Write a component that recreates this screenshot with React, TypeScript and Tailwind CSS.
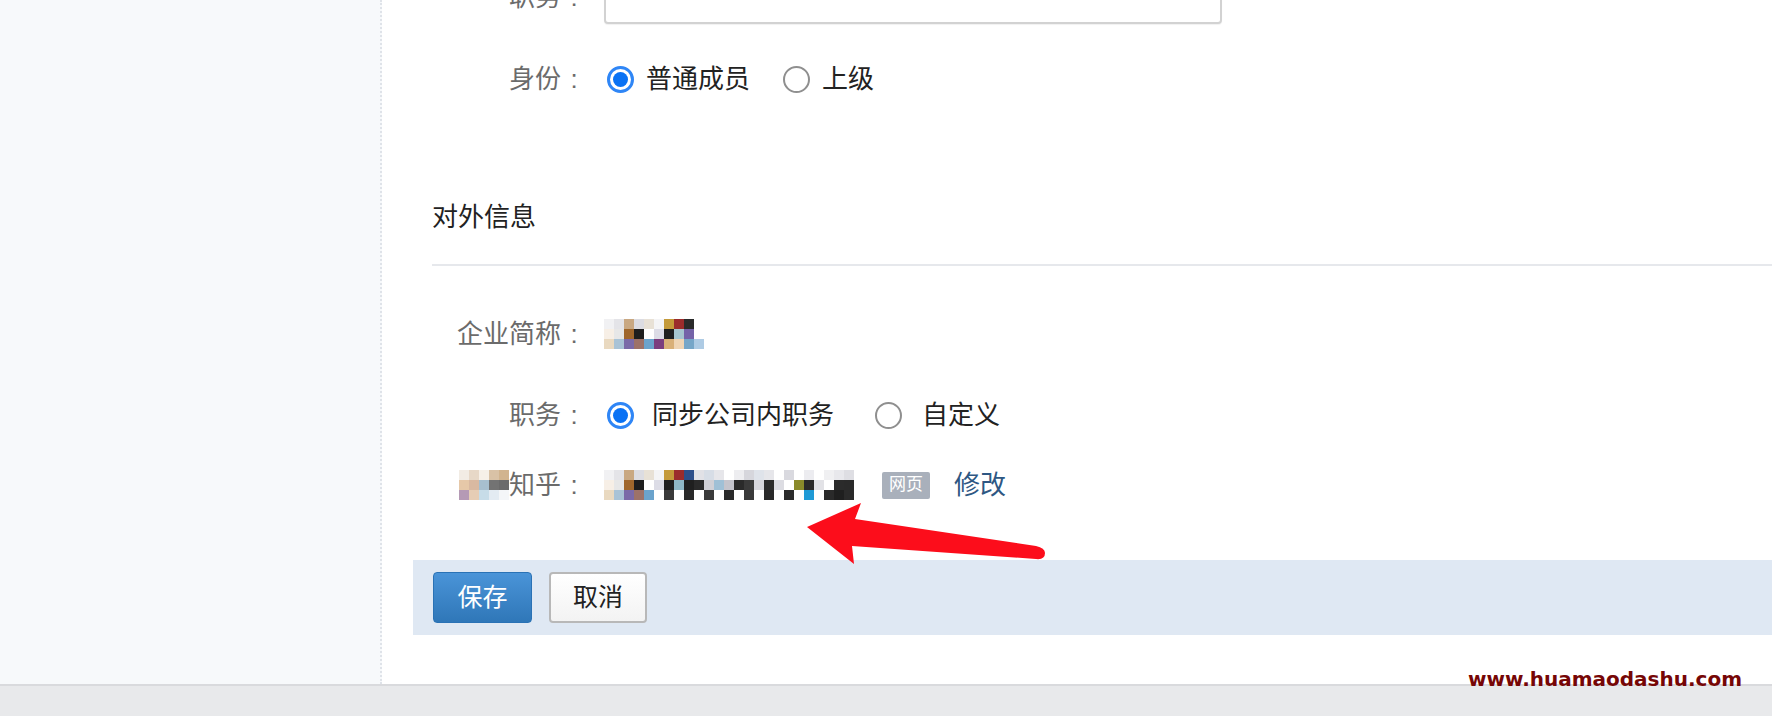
const cjk = "font-['Liberation_Sans','Noto_Sans_CJK_SC',sans-serif]";

// pixelated (mosaic) blocks standing in for blurred text
const mosaicA = [
  ["bg-[#f1f1f3]", "bg-[#e4e4e8]", "bg-[#c9a882]", "bg-[#dcdce2]", "bg-[#e8e1d6]", "bg-[#f4f4f6]", "bg-[#c49a3a]", "bg-[#9b2c2c]", "bg-[#2a2a2a]", "bg-[#ffffff]"],
  ["bg-[#f7efe6]", "bg-[#e7e7e7]", "bg-[#a0672c]", "bg-[#1e1e1e]", "bg-[#ffffff]", "bg-[#dcdce6]", "bg-[#1f1f1f]", "bg-[#a6c6cf]", "bg-[#7463a8]", "bg-[#ffffff]"],
  ["bg-[#e9d9c0]", "bg-[#a9c3d6]", "bg-[#7a6aa8]", "bg-[#9d7268]", "bg-[#6ba3cc]", "bg-[#7b3d7e]", "bg-[#d9b078]", "bg-[#efd5b5]", "bg-[#76a6c8]", "bg-[#aecbe4]"],
];

const mosaicPrefix = [
  ["bg-[#f2ece4]", "bg-[#e7d8c7]", "bg-[#f6f0e8]", "bg-[#d9c2a6]", "bg-[#d1b48f]"],
  ["bg-[#e6c8a8]", "bg-[#d9b9a1]", "bg-[#a7bfcf]", "bg-[#737373]", "bg-[#6b6b6b]"],
  ["bg-[#b59ab5]", "bg-[#e6cdb5]", "bg-[#c7dce8]", "bg-[#e3ebf2]", "bg-[#f4f6f8]"],
];

const mosaicB = [
  ["bg-[#f1f1f3]", "bg-[#e4e4e8]", "bg-[#c9a882]", "bg-[#dcdce2]", "bg-[#e8e1d6]", "bg-[#f4f4f6]", "bg-[#c49a3a]", "bg-[#9b2c2c]", "bg-[#2d4f8a]", "bg-[#e1e1e6]", "bg-[#d7dde6]", "bg-[#e6e6ea]", "bg-[#ffffff]", "bg-[#ededf0]", "bg-[#d6d6dc]", "bg-[#dfe3ea]", "bg-[#e6e6ea]", "bg-[#ffffff]", "bg-[#d9d9df]", "bg-[#ffffff]", "bg-[#ececf0]", "bg-[#ffffff]", "bg-[#f0f0f2]", "bg-[#e8e8ec]", "bg-[#dedee3]", "bg-[#ffffff]"],
  ["bg-[#f7efe6]", "bg-[#e7e7e7]", "bg-[#a0672c]", "bg-[#1e1e1e]", "bg-[#ffffff]", "bg-[#dcdce6]", "bg-[#1f1f1f]", "bg-[#8fb7c6]", "bg-[#1f1f1f]", "bg-[#2a2a2a]", "bg-[#d0d0d6]", "bg-[#9fc0d6]", "bg-[#c4c4cc]", "bg-[#2a2a2a]", "bg-[#3a3a3a]", "bg-[#d6d6dc]", "bg-[#2b2b2b]", "bg-[#dcdce2]", "bg-[#ffffff]", "bg-[#8a8a2a]", "bg-[#2a2a2a]", "bg-[#e2e2e6]", "bg-[#ffffff]", "bg-[#2b2b2b]", "bg-[#2a2a2a]", "bg-[#ffffff]"],
  ["bg-[#e9d9c0]", "bg-[#a9c3d6]", "bg-[#7a6aa8]", "bg-[#9d7268]", "bg-[#6ba3cc]", "bg-[#ffffff]", "bg-[#3a3a3a]", "bg-[#ffffff]", "bg-[#2a2a2a]", "bg-[#ffffff]", "bg-[#3a3a3a]", "bg-[#ffffff]", "bg-[#2a2a2a]", "bg-[#ffffff]", "bg-[#3a3a3a]", "bg-[#ffffff]", "bg-[#2a2a2a]", "bg-[#ffffff]", "bg-[#2b2b2b]", "bg-[#ffffff]", "bg-[#1f9ad6]", "bg-[#ffffff]", "bg-[#2a2a2a]", "bg-[#1f1f1f]", "bg-[#2a2a2a]", "bg-[#ffffff]"],
];

const Mosaic = ({ rows }: { rows: string[][] }) => (
  <div className="flex flex-col">
    {rows.map((row, i) => (
      <div key={i} className="flex">
        {row.map((c, j) => (
          <div key={j} className={`w-[10px] h-[10px] ${c}`} />
        ))}
      </div>
    ))}
  </div>
);

const Radio = ({ checked, label, className }: { checked?: boolean; label: string; className: string }) => (
  <div className={`flex items-center ${className}`}>
    {checked ? (
      <div className="w-[27px] h-[27px] rounded-full border-[3px] border-[#2f86f6] bg-white flex items-center justify-center shrink-0">
        <div className="w-[15px] h-[15px] rounded-full bg-[#0a72f4]" />
      </div>
    ) : (
      <div className="w-[27px] h-[27px] rounded-full border-2 border-[#8f8f8f] bg-white shrink-0" />
    )}
    <span className="text-[26px] text-[#222]">{label}</span>
  </div>
);

const Label = ({ children }: { children: React.ReactNode }) => (
  <div className="w-[155px] flex justify-end items-center text-[26px] text-[#6b6b6b] shrink-0">
    {children}
    <span className="w-[26px] text-center">:</span>
  </div>
);

const App = () => {
  return (
    <div className={`relative w-[1772px] h-[716px] overflow-hidden bg-white ${cjk}`}>
      <div className="flex h-[684px]">
        {/* Sidebar */}
        <div className="w-[382px] shrink-0 bg-[#f7f9fb] border-r-2 border-dotted border-[#dfe3e9]" />

        {/* Main */}
        <div className="flex-1 flex flex-col overflow-hidden">
          <div className="flex flex-col pl-[50px]">
            {/* 职务 input (cut off at top) */}
            <div className="flex items-center h-[54px] mt-[-30px]">
              <Label>职务</Label>
              <div className="ml-[17px] w-[618px] h-full border-2 border-[#d2d2d2] rounded-[4px] bg-white shadow-[0_1px_1px_rgba(0,0,0,0.06)]" />
            </div>

            <div className="flex items-center h-[40px] mt-[35px]">
              <Label>身份</Label>
              <div className="ml-[17px] flex items-center">
                <Radio checked label="普通成员" className="ml-[3px] gap-[12px]" />
                <Radio label="上级" className="ml-[33px] gap-[12px]" />
              </div>
            </div>

            <div className="flex items-center h-[40px] mt-[98px] text-[26px] text-[#222]">对外信息</div>
            <div className="mt-[27px] h-[2px] bg-[#e6e8ec]" />

            <div className="flex items-center h-[40px] mt-[48px]">
              <Label>企业简称</Label>
              <div className="ml-[17px]">
                <Mosaic rows={mosaicA} />
              </div>
            </div>

            <div className="flex items-center h-[40px] mt-[41px]">
              <Label>职务</Label>
              <div className="ml-[17px] flex items-center">
                <Radio checked label="同步公司内职务" className="ml-[3px] gap-[18px]" />
                <Radio label="自定义" className="ml-[41px] gap-[20px]" />
              </div>
            </div>

            <div className="flex items-center h-[40px] mt-[30px]">
              <Label>
                <Mosaic rows={mosaicPrefix} />
                <span>知乎</span>
              </Label>
              <div className="ml-[17px] flex items-center">
                <Mosaic rows={mosaicB} />
                <span className="ml-[18px] h-[27px] px-[7px] flex items-center bg-[#a9b0bb] text-white text-[17px] rounded-[2px]">网页</span>
                <span className="ml-[24px] text-[26px] text-[#2e5783]">修改</span>
              </div>
            </div>
          </div>

          {/* Action bar */}
          <div className="ml-[31px] mt-[55px] h-[75px] bg-[#dfe8f3] flex items-center pl-[20px] gap-[17px]">
            <button className="w-[99px] h-[51px] rounded-[4px] border border-[#2a72b5] bg-gradient-to-b from-[#4a94d8] to-[#2f77b8] text-white text-[25px]">
              保存
            </button>
            <button className="w-[98px] h-[51px] rounded-[4px] border-2 border-[#b8b8b8] bg-gradient-to-b from-white to-[#f3f3f3] text-[#222] text-[25px]">
              取消
            </button>
          </div>
        </div>
      </div>

      {/* Bottom gray strip */}
      <div className="h-[32px] bg-[#e8e9eb] border-t-2 border-[#d9dadd]" />

      {/* Red annotation arrow */}
      <svg className="absolute left-0 top-0 pointer-events-none" width="1772" height="716">
        <path
          d="M807,527 L861,503 L855,519 L1036,546 Q1045,548 1045,553 Q1045,560 1036,559 L852,546 L854,564 Z"
          fill="#fc0d1b"
        />
      </svg>

      {/* Watermark */}
      <div className="absolute left-[1468px] top-[669px] text-[20px] leading-[20px] font-bold text-[#760606] font-['DejaVu_Sans',sans-serif]">
        www.huamaodashu.com
      </div>
    </div>
  );
};

export default App;
